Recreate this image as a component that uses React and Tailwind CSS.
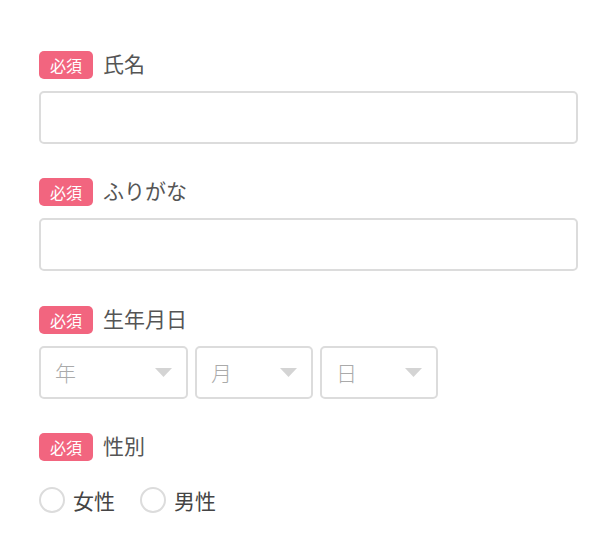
import React from "react";

const font = { fontFamily: '"Noto Sans CJK JP", "Noto Sans", sans-serif' };

const Label = ({ children }) => (
  <div className="flex items-center gap-[10px] h-[28px]">
    <span className="bg-[#f2657f] text-white text-[16px] leading-none rounded-[5px] w-[54px] h-[28px] flex items-center justify-center">
      必須
    </span>
    <span className="text-[21px] text-[#555] leading-none -mt-[4px]">{children}</span>
  </div>
);

const Select = ({ label, width }) => (
  <div
    className={`${width} h-[53px] border-2 border-[#dcdcdc] rounded-[5px] flex items-center justify-between pl-[14px] pr-[14px]`}
  >
    <span className="text-[21px] text-[#aaa] font-light leading-none">{label}</span>
    <svg width="17" height="9" viewBox="0 0 17 9">
      <path d="M0 0 H17 L8.5 9 Z" fill="#d4d4d4" />
    </svg>
  </div>
);

const Radio = ({ label }) => (
  <label className="flex items-center gap-[8px]">
    <span className="w-[26px] h-[26px] rounded-full border-2 border-[#dcdcdc] bg-white" />
    <span className="text-[21px] text-[#444] leading-none">{label}</span>
  </label>
);

const App = () => {
  return (
    <div className="bg-white w-[610px] h-[549px] pl-[39px] pr-[32px] pt-[51px]" style={font}>
      <div className="flex flex-col gap-3">
        <Label>氏名</Label>
        <div className="h-[53px] border-2 border-[#dcdcdc] rounded-[5px]" />
      </div>
      <div className="flex flex-col gap-3 mt-[34px]">
        <Label>ふりがな</Label>
        <div className="h-[53px] border-2 border-[#dcdcdc] rounded-[5px]" />
      </div>
      <div className="flex flex-col gap-3 mt-[35px]">
        <Label>生年月日</Label>
        <div className="flex gap-[7px]">
          <Select label="年" width="w-[149px]" />
          <Select label="月" width="w-[118px]" />
          <Select label="日" width="w-[118px]" />
        </div>
      </div>
      <div className="flex flex-col gap-[26px] mt-[34px]">
        <Label>性別</Label>
        <div className="flex gap-[25px]">
          <Radio label="女性" />
          <Radio label="男性" />
        </div>
      </div>
    </div>
  );
};

export default App;
